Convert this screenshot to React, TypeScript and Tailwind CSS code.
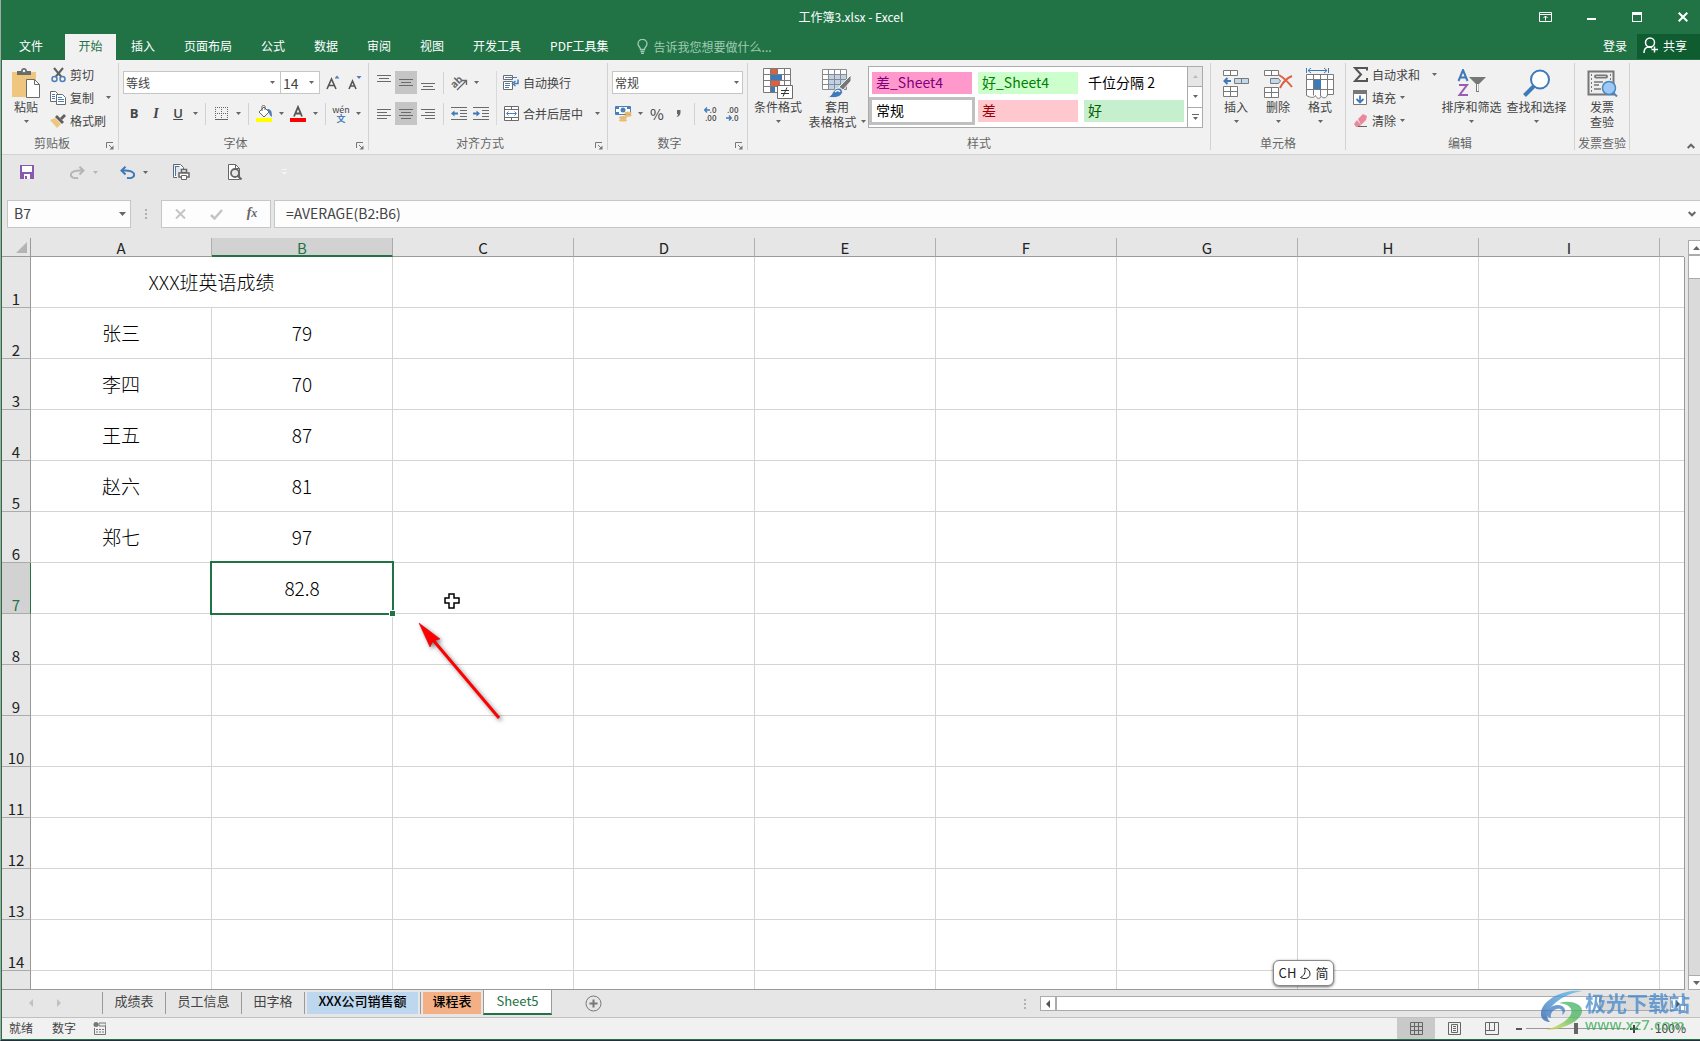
import React from 'react';

const COLUMNS = ['A', 'B', 'C', 'D', 'E', 'F', 'G', 'H', 'I'];
const ROWS = [1, 2, 3, 4, 5, 6, 7, 8, 9, 10, 11, 12, 13, 14];

const CELLS: Record<string, string> = {
  A1: 'XXX班英语成绩',
  A2: '张三', B2: '79',
  A3: '李四', B3: '70',
  A4: '王五', B4: '87',
  A5: '赵六', B5: '81',
  A6: '郑七', B6: '97',
  B7: '82.8',
};

const MENU_TABS = ['插入', '页面布局', '公式', '数据', '审阅', '视图', '开发工具', 'PDF工具集'];

const STYLES = [
  { label: '差_Sheet4', className: 'border-transparent bg-[#ff99cc] text-[#800080]' },
  { label: '好_Sheet4', className: 'border-transparent bg-[#ccffcc] text-[#008000]' },
  { label: '千位分隔 2', className: 'border-transparent bg-white text-black' },
  { label: '常规', className: 'border-[#c0c0c0] bg-white text-black' },
  { label: '差', className: 'border-transparent bg-[#ffc7ce] text-[#9c0006]' },
  { label: '好', className: 'border-transparent bg-[#c6efce] text-[#006100]' },
];

const Arrow = ({ className = 'text-[#666]' }: { className?: string }) => (
  <svg className={`shrink-0 ${className}`} width="5" height="3" viewBox="0 0 5 3" fill="currentColor">
    <path d="M0 0h5L2.5 3z" />
  </svg>
);

const DropArrow = ({ label }: { label: string }) => (
  <button aria-label={label} className="flex h-[23px] w-3 items-center justify-center">
    <Arrow />
  </button>
);

const Separator = () => <div className="mx-1 h-[22px] w-px shrink-0 bg-[#d2d2d2]" />;

interface ToolProps {
  label: string;
  active?: boolean;
  children: React.ReactNode;
}

const Tool = ({ label, active, children }: ToolProps) => (
  <button
    aria-label={label}
    className={`flex h-[23px] w-[22px] shrink-0 items-center justify-center ${active ? 'bg-[#c5c5c5]' : ''}`}
  >
    {children}
  </button>
);

interface GroupProps {
  label: string;
  width: string;
  launcher?: boolean;
  children: React.ReactNode;
}

const Group = ({ label, width, launcher, children }: GroupProps) => (
  <section className={`relative flex h-[87px] shrink-0 flex-col border-r border-[#d2d2d2] ${width}`}>
    <div className="flex h-[71px] shrink-0">{children}</div>
    <div className={`text-center leading-[18px] whitespace-nowrap text-[#666] ${launcher ? 'pr-4' : ''}`}>{label}</div>
    {launcher && (
      <button aria-label={`${label}设置`} className="absolute right-1 bottom-0">
        <svg width="8" height="8" viewBox="0 0 8 8" fill="none" stroke="#777">
          <path d="M.5 6V.5H7M3 3l3 3" />
          <path d="M7.500 3.500v4h-4z" fill="#777" stroke="none" />
        </svg>
      </button>
    )}
  </section>
);

interface BigButtonProps {
  lines: string[];
  width: string;
  arrow?: 'below' | 'side' | 'none';
  children: React.ReactNode;
}

const BigButton = ({ lines, width, arrow = 'below', children }: BigButtonProps) => (
  <button className={`flex shrink-0 flex-col items-center pt-1 whitespace-nowrap ${width}`}>
    <span className="flex h-8 items-center">{children}</span>
    <span className="leading-[15px]">{lines[0]}</span>
    {lines[1] && (
      <span className="flex items-center gap-1 leading-[15px]">
        {lines[1]}
        {arrow === 'side' && <Arrow />}
      </span>
    )}
    {arrow === 'below' && (
      <span className="flex h-[15px] items-center">
        <Arrow />
      </span>
    )}
  </button>
);

interface RowButtonProps {
  label: string;
  arrow?: boolean;
  wide?: boolean;
  children: React.ReactNode;
}

const RowButton = ({ label, arrow, wide, children }: RowButtonProps) => (
  <button className="flex h-[23px] items-center gap-1 whitespace-nowrap">
    <span className="flex w-4 justify-center">{children}</span>
    {label}
    {arrow && <span className={wide ? 'pl-2' : ''}><Arrow /></span>}
  </button>
);

interface LinesProps {
  lines: [number, number, number][];
}

// each entry is x, y, length of one horizontal stroke
const Lines = ({ lines }: LinesProps) => (
  <svg width="16" height="16" viewBox="0 0 16 16" fill="#6a6a6a" shapeRendering="crispEdges">
    {lines.map(([x, y, w]) => (
      <rect key={y} x={x} y={y} width={w} height="1" />
    ))}
  </svg>
);

const ClipboardGroup = () => (
  <Group label="剪贴板" width="w-[117px]" launcher>
    <BigButton lines={['粘贴']} width="w-12">
      <svg width="29" height="31" viewBox="0 0 29 31">
        <path d="M0 4h24v25H0z" fill="#eec67e" />
        <path d="M5 7V3h4c0-4 6-4 6 0h4v4z" fill="#6b6b6b" />
        <circle cx="12" cy="3" r="1.3" fill="#f1f1f1" />
        <path d="M14.500 11.500h8l5 5v13h-13z" fill="#fff" stroke="#6b6b6b" />
        <path d="M22.500 11.500v5h5" fill="none" stroke="#6b6b6b" />
      </svg>
    </BigButton>
    <div className="flex flex-col">
      <RowButton label="剪切">
        <svg width="15" height="16" viewBox="0 0 15 16" fill="none">
          <path d="M3 1l7.500 9M12 1L4.500 10" stroke="#5f5f5f" strokeWidth="2" />
          <circle cx="3.500" cy="12" r="2.500" stroke="#4a7fb9" strokeWidth="1.500" />
          <circle cx="11.500" cy="12" r="2.500" stroke="#4a7fb9" strokeWidth="1.500" />
        </svg>
      </RowButton>
      <RowButton label="复制" arrow wide>
        <svg width="16" height="14" viewBox="0 0 16 14" fill="#fff" stroke="#6b6b6b">
          <path d="M.5.500h5l2 2v8h-7z" />
          <path d="M2 3.500h3M2 5.500h3M2 7.500h3" stroke="#4a7fb9" />
          <path d="M6.500 3.500h6l3 3v7h-9z" />
          <path d="M8 6.500h4M8 8.500h6M8 10.500h6" stroke="#4a7fb9" />
        </svg>
      </RowButton>
      <RowButton label="格式刷">
        <svg width="16" height="14" viewBox="0 0 16 14">
          <path d="M0 6l5-2 6 6-4 4z" fill="#eec67e" />
          <path d="M5 3l2-2 7 7-2 2z" fill="#5f5f5f" />
          <path d="M10 4l4-4 2 2-4 4z" fill="#5f5f5f" />
        </svg>
      </RowButton>
    </div>
  </Group>
);

const FontGroup = () => (
  <Group label="字体" width="w-[250px]" launcher>
    <div className="flex flex-col gap-2 pt-2 pl-1">
      <div className="flex items-center">
        <div className="relative flex items-center">
          <select aria-label="字体名称" className="h-[23px] w-[158px] appearance-none border border-[#c6c6c6] bg-white px-0.5">
            <option>等线</option>
          </select>
          <Arrow className="pointer-events-none absolute right-1.5 text-[#666]" />
        </div>
        <div className="relative -ml-px flex items-center">
          <select aria-label="字号" className="h-[23px] w-10 appearance-none border border-[#c6c6c6] bg-white px-0.5 text-sm">
            <option>14</option>
          </select>
          <Arrow className="pointer-events-none absolute right-1.5 text-[#666]" />
        </div>
        <div className="flex pl-0.5">
          <Tool label="增大字号">
            <svg width="14" height="15" viewBox="0 0 14 15">
              <path d="M1 14L5.500 4 10 14M2.500 10.500h6" fill="none" stroke="#555" strokeWidth="1.600" />
              <path d="M8.500 3.500h5L11 .5z" fill="#4a7fb9" />
            </svg>
          </Tool>
          <Tool label="减小字号">
            <svg width="14" height="15" viewBox="0 0 14 15">
              <path d="M1 14l3.500-8L8 14M2.500 11h4" fill="none" stroke="#555" strokeWidth="1.600" />
              <path d="M8.500 1h5L11 4z" fill="#4a7fb9" />
            </svg>
          </Tool>
        </div>
      </div>
      <div className="flex items-center">
        <Tool label="加粗"><b className="font-['Open_Sans',sans-serif] text-[13px]">B</b></Tool>
        <Tool label="倾斜"><i className="font-['Liberation_Serif',serif] text-sm font-bold">I</i></Tool>
        <Tool label="下划线"><u className="font-['Open_Sans',sans-serif] text-[13px] font-semibold">U</u></Tool>
        <DropArrow label="下划线类型" />
        <Separator />
        <Tool label="边框">
          <svg width="13" height="13" viewBox="0 0 13 13" fill="none" stroke="#666">
            <path d="M.5 0v12M6.500 0v12M12.500 0v12M0 .5h13M0 6.500h13" strokeDasharray="1 1" />
            <path d="M0 12.500h13" />
          </svg>
        </Tool>
        <DropArrow label="边框类型" />
        <Separator />
        <Tool label="填充颜色">
          <svg width="17" height="17" viewBox="0 0 17 17">
            <path d="M3 7l5-5 5 5-5 5z" fill="#fff" stroke="#666" />
            <path d="M6 6V1.500C6 0 9 0 9 1.500V5" fill="none" stroke="#666" />
            <path d="M11 4c4 0 5 2 5 8-2-1-3-3-3-5z" fill="#4a7fb9" />
            <path d="M0 13h16v4H0z" fill="#ffff00" />
          </svg>
        </Tool>
        <DropArrow label="更多填充颜色" />
        <Tool label="字体颜色">
          <svg width="17" height="17" viewBox="0 0 17 17">
            <path d="M4 11.500L8 2l4 9.500M5.500 8.500h5" fill="none" stroke="#555" strokeWidth="1.800" />
            <path d="M0 13h16v4H0z" fill="#f00" />
          </svg>
        </Tool>
        <DropArrow label="更多字体颜色" />
        <Separator />
        <Tool label="拼音">
          <span className="flex flex-col items-center text-[9px] leading-[9px]">
            <span>wén</span>
            <span className="font-bold text-[#4a7fb9]">文</span>
          </span>
        </Tool>
        <DropArrow label="拼音设置" />
      </div>
    </div>
  </Group>
);

const AlignGroup = () => (
  <Group label="对齐方式" width="w-[239px]" launcher>
    <div className="flex flex-col gap-2 pt-2 pl-1">
      <div className="flex items-center">
        <Tool label="顶端对齐"><Lines lines={[[1, 0, 14], [3, 3, 10], [1, 6, 14]]} /></Tool>
        <Tool label="垂直居中" active><Lines lines={[[1, 4, 14], [3, 7, 10], [1, 10, 14]]} /></Tool>
        <Tool label="底端对齐"><Lines lines={[[1, 8, 14], [3, 11, 10], [1, 14, 14]]} /></Tool>
        <Separator />
        <Tool label="方向">
          <svg className="overflow-visible" width="17" height="16" viewBox="0 0 17 16" fill="none" stroke="#666">
            <text x="0" y="11" transform="rotate(-45 5 8)" fontSize="10" fontWeight="600" fill="#666" stroke="none">ab</text>
            <path d="M6 15L15 6M11 5.500h4.500V10" strokeWidth="1.300" />
          </svg>
        </Tool>
        <DropArrow label="更多方向" />
      </div>
      <div className="flex items-center">
        <Tool label="左对齐"><Lines lines={[[1, 3, 14], [1, 6, 10], [1, 9, 14], [1, 12, 10]]} /></Tool>
        <Tool label="居中" active><Lines lines={[[1, 3, 14], [3, 6, 10], [1, 9, 14], [3, 12, 10]]} /></Tool>
        <Tool label="右对齐"><Lines lines={[[1, 3, 14], [5, 6, 10], [1, 9, 14], [5, 12, 10]]} /></Tool>
        <Separator />
        <Tool label="减少缩进量">
          <svg width="16" height="13" viewBox="0 0 16 13">
            <path d="M0 .5h16M9 3.500h7M9 6.500h7M9 9.500h7M0 12.500h16" stroke="#6a6a6a" />
            <path d="M0 6.500l3.500-3v2H7v2H3.500v2z" fill="#3f7ab8" />
          </svg>
        </Tool>
        <Tool label="增加缩进量">
          <svg width="16" height="13" viewBox="0 0 16 13">
            <path d="M0 .5h16M9 3.500h7M9 6.500h7M9 9.500h7M0 12.500h16" stroke="#6a6a6a" />
            <path d="M7 6.500l-3.500-3v2H0v2h3.500v2z" fill="#3f7ab8" />
          </svg>
        </Tool>
      </div>
    </div>
    <div className="mt-2 ml-1 h-[54px] w-px bg-[#d9d9d9]" />
    <div className="flex flex-col gap-2 pt-2 pl-1.5">
      <RowButton label="自动换行">
        <svg className="shrink-0" width="16" height="15" viewBox="0 0 16 15" fill="none">
          <path d="M.5.500h9v4h-9zM.5 6.500h9v8h-9z" fill="#fff" stroke="#6b6b6b" />
          <path d="M2 2.500h12M2 8.500h5M2 10.500h5M2 12.500h4" stroke="#4a7fb9" />
          <path d="M15 4.500v4h-4M12.500 6l-3 2.500 3 2.500" stroke="#4a7fb9" strokeWidth="1.500" />
        </svg>
      </RowButton>
      <RowButton label="合并后居中" arrow wide>
        <svg className="shrink-0" width="15" height="15" viewBox="0 0 15 15" fill="none">
          <path d="M.5.500h14v14H.5zM.5 3.500h14M.5 11.500h14M7.500.5v3M7.500 11.500v3" fill="#fff" stroke="#6b6b6b" />
          <path d="M3 7.500h9M4.500 5.500l-2 2 2 2M10.500 5.500l2 2-2 2" stroke="#4a7fb9" />
        </svg>
      </RowButton>
    </div>
  </Group>
);

const NumberGroup = () => (
  <Group label="数字" width="w-[140px]" launcher>
    <div className="flex flex-col gap-2 pt-2 pl-1">
      <div className="relative flex items-center">
        <select aria-label="数字格式" className="h-[23px] w-[131px] appearance-none border border-[#c6c6c6] bg-white px-0.5">
          <option>常规</option>
        </select>
        <Arrow className="pointer-events-none absolute right-1 text-[#666]" />
      </div>
      <div className="flex items-center">
        <Tool label="会计数字格式">
          <svg width="17" height="17" viewBox="0 0 17 17">
            <path d="M.5 1.500h15v8H.5z" fill="#fff" stroke="#4a7fb9" />
            <path d="M1 2h3v2H1zM12 2h3v2h-3zM1 7h3v2H1z" fill="#4a7fb9" />
            <circle cx="8" cy="5" r="2.500" fill="#4a7fb9" />
            <ellipse cx="13" cy="8" rx="3.500" ry="1.500" fill="#e8bb70" />
            <ellipse cx="13" cy="10.500" rx="3.500" ry="1.300" fill="#e8bb70" />
            <ellipse cx="8" cy="12.500" rx="4" ry="1.500" fill="#e8bb70" />
            <ellipse cx="8" cy="15.300" rx="4" ry="1.300" fill="#e8bb70" />
          </svg>
        </Tool>
        <DropArrow label="更多会计格式" />
        <Tool label="百分比样式"><span className="text-[15px]">%</span></Tool>
        <Tool label="千位分隔样式">
          <svg width="6" height="8" viewBox="0 0 6 8" fill="#666">
            <path d="M1 0h3.500v2.500C4.500 5 3 6.500.5 7c1-1 1.500-2 1.500-3H1z" />
          </svg>
        </Tool>
        <Separator />
        <Tool label="增加小数位数">
          <span className="flex flex-col items-end text-[8px] leading-[8px] font-medium">
            <span className="flex items-center">
              <svg width="6" height="6" viewBox="0 0 6 6" fill="none" stroke="#3f7ab8"><path d="M6 3H1M3 .5L.7 3 3 5.500" strokeWidth="1.300" /></svg>
              .0
            </span>
            <span>.00</span>
          </span>
        </Tool>
        <Tool label="减少小数位数">
          <span className="flex flex-col items-end text-[8px] leading-[8px] font-medium">
            <span>.00</span>
            <span className="flex items-center">
              <svg width="6" height="6" viewBox="0 0 6 6" fill="none" stroke="#3f7ab8"><path d="M0 3h5M3 .5L5.300 3 3 5.500" strokeWidth="1.300" /></svg>
              .0
            </span>
          </span>
        </Tool>
      </div>
    </div>
  </Group>
);

const StylesGroup = () => (
  <Group label="样式" width="w-[463px]">
    <BigButton lines={['条件格式']} width="w-[60px]">
      <svg width="30" height="31" viewBox="0 0 30 31">
        <path d="M.5.500h27v24H.5zM7.500.500v24M14.500.500v24M21.500.500v24M.5 6.500h27M.5 12.500h27M.5 18.500h27" fill="#fff" stroke="#7a7a7a" />
        <path d="M8 1h6v5H8zM8 13h9v5H8z" fill="#dc6141" />
        <path d="M8 7h11v5H8zM8 19h4v5H8z" fill="#3f7ab8" />
        <path d="M14.500 17.500h15v13h-15z" fill="#fff" stroke="#6b6b6b" />
        <path d="M18 22.500h8M18 25.500h8M24 19.500l-4 9" stroke="#333" fill="none" />
      </svg>
    </BigButton>
    <BigButton lines={['套用', '表格格式']} width="w-[58px]" arrow="side">
      <svg width="30" height="30" viewBox="0 0 30 30">
        <path d="M.5 1.500h24v20H.5z" fill="#fff" />
        <path d="M6 7h18v15H6z" fill="#bdd1e9" />
        <path d="M.5 1.500h24v20H.5zM6.500 1.500v20M12.500 1.500v20M18.500 1.500v20M.5 6.500h24M.5 11.500h24M.5 16.500h24" fill="none" stroke="#8a8a8a" />
        <path d="M29 7v6l-8 9-4-3z" fill="#777" stroke="#f1f1f1" />
        <path d="M6 29c5-1 4-8 10-9 4 0 6 4 3 7s-8 3-13 2z" fill="#3f7ab8" stroke="#f1f1f1" />
        <path d="M13 24c2-2 4-2 5 0" stroke="#fff" fill="none" strokeWidth="1.500" />
      </svg>
    </BigButton>
    <div className="mt-[3px] ml-0.5 flex h-[62px] border border-[#ababab] bg-white">
      <div className="grid grid-cols-3 content-start pt-0.5">
        {STYLES.map((style) => (
          <button
            key={style.label}
            className={`h-7 w-[106px] border-3 bg-clip-padding pb-0.5 pl-1 text-left text-sm leading-5 ${style.className}`}
          >
            {style.label}
          </button>
        ))}
      </div>
      <div className="flex w-[15px] flex-col border-l border-[#ababab]">
        <button aria-label="上一行" className="flex flex-1 items-center justify-center bg-[#e6e6e6]">
          <Arrow className="rotate-180 text-[#bbb]" />
        </button>
        <button aria-label="下一行" className="flex flex-1 items-center justify-center border-y border-[#ababab]">
          <Arrow />
        </button>
        <button aria-label="其他样式" className="flex flex-1 flex-col items-center justify-center gap-0.5">
          <span className="h-px w-[7px] bg-[#666]" />
          <Arrow />
        </button>
      </div>
    </div>
  </Group>
);

const CellsGroup = () => (
  <Group label="单元格" width="w-[135px]">
    <div className="flex pl-1">
      <BigButton lines={['插入']} width="w-[42px]">
        <svg width="27" height="29" viewBox="0 0 27 29" fill="#fff" stroke="#7a7a7a">
          <path d="M.5 1.500h14v5H.5zM7.500 1.500v5M.5 17.500h14v10H.5zM.5 22.500h14M7.500 17.500v10" />
          <path d="M11.500 9.500h14v5h-14zM18.500 9.500v5" fill="#c3d8ea" />
          <path d="M8 12H2M4.500 9L1.500 12l3 3" fill="none" stroke="#3f7ab8" strokeWidth="2" />
        </svg>
      </BigButton>
      <BigButton lines={['删除']} width="w-[42px]">
        <svg width="29" height="29" viewBox="0 0 29 29" fill="#fff" stroke="#7a7a7a">
          <path d="M.5 1.500h14v5H.5zM7.500 1.500v5M.5 18.500h14v10H.5zM.5 23.500h14M7.500 18.500v10" />
          <path d="M6.500 9.500h8l2 2.500-2 2.500h-8z" fill="#c3d8ea" />
          <path d="M15 6c5 3 9 7 13 12M28 7c-5 2-9 6-12 12" fill="none" stroke="#dc6141" strokeWidth="2" />
        </svg>
      </BigButton>
      <BigButton lines={['格式']} width="w-[42px]">
        <svg width="29" height="32" viewBox="0 0 29 32" fill="#fff" stroke="#7a7a7a">
          <path d="M.5 7.500h27v20h-6c-1 4-4 4-6 2-2 3-5 2-6-1-2 3-5 2-9 0zM7.500 7.500v21M14.500 7.500v22M21.500 7.500v21M.5 12.500h27M.5 22.500h27" />
          <path d="M8 13h7v9H8z" fill="#3f7ab8" stroke="none" />
          <path d="M.5 1v5M22.500 1v5M2 3.500h19M5 1L2 3.500 5 6M18 1l3 2.500L18 6" fill="none" stroke="#3f7ab8" />
        </svg>
      </BigButton>
    </div>
  </Group>
);

const EditGroup = () => (
  <Group label="编辑" width="w-[229px]">
    <div className="flex w-[93px] shrink-0 flex-col pl-1.5">
      <RowButton label="自动求和" arrow wide>
        <svg width="15" height="15" viewBox="0 0 15 15" fill="none" stroke="#555" strokeWidth="2">
          <path d="M14 3.500V1H2l6 6.500L2 14h12v-3" />
        </svg>
      </RowButton>
      <RowButton label="填充" arrow>
        <svg width="15" height="15" viewBox="0 0 15 15" fill="none">
          <path d="M.5.500h13v14H.5z" fill="#fff" stroke="#777" />
          <path d="M0 0h14v4H0z" fill="#777" />
          <path d="M7 5.500V12M3.500 9L7 12.500 10.500 9" stroke="#3f7ab8" strokeWidth="1.800" />
        </svg>
      </RowButton>
      <RowButton label="清除" arrow>
        <svg width="15" height="14" viewBox="0 0 15 14">
          <path d="M5 5l5-5 4 2-1 4-5 5z" fill="#e8899c" />
          <path d="M4 6l4 5-2 2H3L1 10z" fill="#e8899c" />
          <path d="M5 12.500h9" stroke="#666" />
        </svg>
      </RowButton>
    </div>
    <BigButton lines={['排序和筛选']} width="w-[65px]">
      <svg width="30" height="28" viewBox="0 0 30 28" fill="none">
        <path d="M1.500 12L6 1l4.500 11M3 8.500h6" stroke="#3f7ab8" strokeWidth="2" />
        <path d="M2 16h8L2.500 26H11" stroke="#9a5bb5" strokeWidth="2" />
        <path d="M12 8h17l-7 7v8h-3v-8z" fill="#777" />
        <path d="M20 15h1.500v7H20z" fill="#fff" />
      </svg>
    </BigButton>
    <BigButton lines={['查找和选择']} width="w-[65px]">
      <svg width="28" height="28" viewBox="0 0 28 28">
        <path d="M1.500 26.500L11 17" stroke="#3f7ab8" strokeWidth="4" />
        <circle cx="17" cy="10.500" r="9" fill="#fff" stroke="#3f7ab8" strokeWidth="2" />
      </svg>
    </BigButton>
  </Group>
);

const InvoiceGroup = () => (
  <Group label="发票查验" width="w-[55px]">
    <BigButton lines={['发票', '查验']} width="w-[54px]" arrow="none">
      <svg width="31" height="27" viewBox="0 0 31 27" fill="none" stroke="#777">
        <path d="M1.500 1.500h25v23h-25z" fill="#eee" strokeWidth="2" />
        <path d="M4.500 4v19M23.500 4v10" strokeDasharray="2 2" />
        <path d="M9 6.500h10" strokeWidth="4" strokeLinecap="round" />
        <path d="M9 6.500h10" stroke="#ccc" />
        <path d="M7 12h9M7 15h5M7 19h7" strokeWidth="1.500" />
        <circle cx="22" cy="18" r="6.500" fill="#9cc9f5" stroke="#4a88bd" strokeWidth="1.500" />
        <path d="M26 22.500l4 4" stroke="#4a88bd" strokeWidth="2" />
      </svg>
    </BigButton>
  </Group>
);

const TitleBar = () => (
  <header className="shrink-0 bg-[#217346] text-white">
    <div className="grid h-[34px] grid-cols-[1fr_auto_1fr] items-center">
      <h1 className="col-start-2">工作簿3.xlsx - Excel</h1>
      <div className="-mr-1.5 flex justify-end">
        <button aria-label="功能区显示选项" className="flex h-8 w-[46px] items-center justify-center">
          <svg width="13" height="10" viewBox="0 0 13 10" fill="none" stroke="#fff">
            <path d="M.5.500h12v9H.5zM.5 2.500h12M6.500 8.500V4M4.500 6l2-2 2 2" />
          </svg>
        </button>
        <button aria-label="最小化" className="flex h-8 w-[46px] items-center justify-center">
          <span className="mt-1 h-0.5 w-[9px] bg-white" />
        </button>
        <button aria-label="最大化" className="flex h-8 w-[46px] items-center justify-center">
          <span className="h-2.5 w-2.5 border border-t-3 border-white" />
        </button>
        <button aria-label="关闭" className="flex h-8 w-[46px] items-center justify-center">
          <svg width="10" height="10" viewBox="0 0 10 10" stroke="#fff" strokeWidth="2"><path d="M.7.700l8.600 8.600M9.300.700L.7 9.300" /></svg>
        </button>
      </div>
    </div>
    <nav className="flex h-[26px] items-stretch whitespace-nowrap">
      <button className="w-[63px] pr-[22px] pb-0.5 pl-[17px]">文件</button>
      <button className="w-[51px] bg-[#f1f1f1] pb-0.5 text-[#217346]">开始</button>
      <div className="flex gap-[29px] pl-[15px]">
        {MENU_TABS.map((tab) => (
          <button key={tab} className="pb-0.5">{tab}</button>
        ))}
      </div>
      <button className="flex items-center gap-1.5 pb-px pl-7 text-[#a0cbb2]">
        <svg width="11" height="15" viewBox="0 0 11 15" fill="none" stroke="#a0cbb2">
          <path d="M3.500 10.500C3.500 8 1 7.500 1 4.800a4.500 4.500 0 019 0C10 7.500 7.500 8 7.500 10.500zM3.500 12.500h4M4 14.300h3" strokeWidth="1.300" />
        </svg>
        告诉我您想要做什么...
      </button>
      <button className="ml-auto px-2.5 pb-0.5">登录</button>
      <button className="mb-px flex w-[63px] items-center gap-1 bg-[#0e5c2f] pb-0.5 pl-1.5">
        <svg width="16" height="17" viewBox="0 0 16 17" fill="none" stroke="#fff" strokeWidth="1.500">
          <circle cx="7" cy="5.500" r="4.500" />
          <path d="M1 16c0-4 2-6 5-6 1.500 0 2 .3 3 1M11.500 9.500v6M8.500 12.500h6.500" />
        </svg>
        共享
      </button>
    </nav>
  </header>
);

const QuickAccess = () => (
  <div className="flex h-[45px] shrink-0 items-start pt-[9px] pl-[18px]">
    <button aria-label="保存" className="h-4 w-[50px]">
      <svg width="14" height="14" viewBox="0 0 14 14">
        <path d="M0 0h14v14H0z" fill="#8a58ac" />
        <path d="M2 1h10v6H2zM4 9h6v5H4z" fill="#fff" />
        <path d="M5 11h2v3H5z" fill="#8a58ac" />
      </svg>
    </button>
    <button aria-label="恢复" className="flex h-4 w-[50px] items-center gap-2">
      <svg width="15" height="13" viewBox="0 0 15 13" fill="none" stroke="#b5b5b5" strokeWidth="2">
        <path d="M8 12C1 13 0 9 1.500 7S6 4 13 4.500M9.500.700L13.500 4.500l-4 4" />
      </svg>
      <Arrow className="text-[#b5b5b5]" />
    </button>
    <button aria-label="撤消" className="flex h-4 w-[53px] items-center gap-2">
      <svg width="15" height="13" viewBox="0 0 15 13" fill="none" stroke="#3f7ab8" strokeWidth="2">
        <path d="M7 12c7 1 8-3 6.500-5S9 4 2 4.500M5.500.700L1.500 4.500l4 4" />
      </svg>
      <Arrow />
    </button>
    <button aria-label="快速打印" className="h-4 w-[55px]">
      <svg width="17" height="16" viewBox="0 0 17 16" fill="none" stroke="#666">
        <path d="M.5.500h7l3 3V5M.5.500v13H4" fill="#fff" />
        <path d="M2.500 2v10M2.500 2.500h4" stroke="#3f7ab8" />
        <path d="M8.500 5.500h5v3h-5zM6 9h10v4H6z" fill="#fff" strokeWidth="1.500" />
        <path d="M8.500 11.500h5v4h-5z" fill="#fff" />
      </svg>
    </button>
    <button aria-label="打印预览" className="h-4 w-[54px]">
      <svg width="15" height="16" viewBox="0 0 15 16" fill="none" stroke="#666">
        <path d="M.5.500h7l4 4v11H.5z" fill="#fff" />
        <path d="M7.500.500v4h4" />
        <circle cx="7" cy="9" r="4" fill="#e6e6e6" strokeWidth="1.800" />
        <path d="M9.500 11.500l4 4" strokeWidth="2.200" />
      </svg>
    </button>
    <button aria-label="自定义快速访问工具栏" className="flex h-4 flex-col items-center justify-center gap-0.5">
      <span className="h-px w-[5px] bg-[#f5f5f5]" />
      <Arrow className="text-[#f5f5f5]" />
    </button>
  </div>
);

const FormulaBar = () => (
  <div className="flex h-7 shrink-0 items-stretch pl-[5px]">
    <div className="relative flex items-center">
      <input aria-label="名称框" defaultValue="B7" className="h-7 w-[124px] border border-[#c6c6c6] bg-[#fdfdfd] pb-0.5 pl-1.5 text-sm text-[#444]" />
      <svg className="pointer-events-none absolute right-[5px]" width="7" height="4" viewBox="0 0 7 4" fill="#666"><path d="M0 0h7L3.500 4z" /></svg>
    </div>
    <div className="flex w-[30px] flex-col items-center justify-center gap-0.5">
      <span className="h-0.5 w-0.5 bg-[#b0b0b0]" />
      <span className="h-0.5 w-0.5 bg-[#b0b0b0]" />
      <span className="h-0.5 w-0.5 bg-[#b0b0b0]" />
    </div>
    <div className="grid w-[110px] grid-cols-3 items-center justify-items-center border border-[#c6c6c6] bg-[#fdfdfd]">
      <button aria-label="取消">
        <svg width="11" height="10" viewBox="0 0 11 10" stroke="#c4c4c4" strokeWidth="2"><path d="M1 .5l9 9M10 .5l-9 9" /></svg>
      </button>
      <button aria-label="输入">
        <svg width="13" height="11" viewBox="0 0 13 11" fill="none" stroke="#c4c4c4" strokeWidth="2.500"><path d="M1 6l3.500 3.500L12 1" /></svg>
      </button>
      <button aria-label="插入函数" className="pb-0.5 font-['Liberation_Serif',serif] text-sm font-bold text-[#666] italic">
        f<span className="text-xs">x</span>
      </button>
    </div>
    <div className="relative ml-[3px] flex flex-1 items-center">
      <input aria-label="编辑栏" defaultValue="=AVERAGE(B2:B6)" className="h-7 w-full border border-r-0 border-[#c6c6c6] bg-[#fdfdfd] pb-0.5 pl-[11px] text-sm text-[#444]" />
      <button aria-label="展开编辑栏" className="absolute right-1">
        <svg width="8" height="6" viewBox="0 0 8 6" fill="none" stroke="#666" strokeWidth="2"><path d="M.7 1L4 4.300 7.300 1" /></svg>
      </button>
    </div>
  </div>
);

const Cell = ({ id }: { id: string }) => {
  const selected = id === 'B7';
  return (
    <td
      colSpan={id === 'A1' ? 2 : 1}
      className="relative border-r border-b border-[#d4d4d4] text-center align-middle text-[19px] leading-6 font-light text-black"
    >
      {CELLS[id]}
      {selected && (
        <>
          <div className="absolute -inset-0.5 z-10 border-2 border-[#217346]" />
          <div className="absolute -right-1 -bottom-1 z-10 h-[7px] w-[7px] border border-white bg-[#217346]" />
        </>
      )}
    </td>
  );
};

const Grid = () => (
  <table className="w-full table-fixed border-separate border-spacing-0 text-[15px] text-[#222]">
    <colgroup>
      <col className="w-[29px]" />
      {COLUMNS.map((col) => <col key={col} className="w-[181px]" />)}
      <col />
    </colgroup>
    <thead>
      <tr className="h-[19px] leading-[18px]">
        <th aria-label="全选" className="border-r border-b border-[#999] bg-[#e6e6e6] p-0">
          <svg className="mr-[3px] ml-auto" width="11" height="11" viewBox="0 0 11 11" fill="#b4b4b4"><path d="M11 0v11H0z" /></svg>
        </th>
        {COLUMNS.map((col) => (
          <th
            key={col}
            className={`border-r p-0 pt-0.5 font-normal ${
              col === 'B'
                ? 'border-b-2 border-r-[#ababab] border-b-[#217346] bg-[#d2d2d2] leading-[15px] text-[#217346]'
                : 'border-b border-r-[#b0b0b0] border-b-[#999] leading-4'
            }`}
          >
            {col}
          </th>
        ))}
        <th className="border-b border-[#999] p-0" />
      </tr>
    </thead>
    <tbody>
      {ROWS.map((row) => (
        <tr key={row} className="h-[51px]">
          <th
            className={`border-r border-b border-b-[#ababab] p-0 align-bottom leading-4 font-normal ${
              row === 7
                ? 'border-r-[#217346] bg-[#d2d2d2] text-[#217346]'
                : 'border-r-[#999] bg-[#e6e6e6]'
            }`}
          >
            {row}
          </th>
          {COLUMNS.filter((col) => row !== 1 || col !== 'B').map((col) => (
            <Cell key={col} id={`${col}${row}`} />
          ))}
          <td className="border-b border-[#d4d4d4]" />
        </tr>
      ))}
      <tr className="h-[51px]">
        <th className="border-r border-[#999] bg-[#e6e6e6]" />
        {COLUMNS.map((col) => (
          <td key={col} className="border-r border-[#d4d4d4]" />
        ))}
        <td />
      </tr>
    </tbody>
  </table>
);

const Worksheet = () => (
  <main className="flex min-h-0 flex-1 pt-2.5">
    <div className="relative min-w-0 flex-1 overflow-hidden border-b border-[#999]">
      <div className="absolute inset-x-0 top-[19px] bottom-0 border-r border-[#999] bg-white" />
      <div className="relative mr-px">
        <Grid />
      </div>
      <svg className="absolute top-[355px] left-[442px]" width="16" height="16" viewBox="0 0 16 16">
        <path d="M5 1h5v4h5v5h-5v5H5v-5H1V5h4z" fill="#fff" stroke="#000" strokeWidth="1.500" />
      </svg>
      <svg className="absolute top-[381px] left-[413px] drop-shadow-[2px_2px_2px_rgba(0,0,0,0.5)]" width="92" height="108" viewBox="0 0 92 108">
        <path d="M18 21L84 99" stroke="#f00" strokeWidth="3" />
        <path d="M4 4l21 16-7 2-3 6z" fill="#f00" stroke="#c00" strokeWidth=".5" />
      </svg>
      <div className="absolute right-[351px] bottom-[3px] flex h-[26px] w-[61px] items-center justify-center gap-1 rounded-md border border-[#888] bg-white text-[13px] whitespace-nowrap text-[#222] shadow-[0_1px_3px_rgba(0,0,0,0.6)]">
        CH
        <svg width="11" height="13" viewBox="0 0 11 13" fill="none" stroke="#222"><path d="M4.500 1c1 3 1 7-4 9.500C5 13 10 11 10 7c0-3-2-5.500-5.500-6z" /></svg>
        简
      </div>
    </div>
    <div className="mt-0.5 ml-[3px] flex w-3 flex-col overflow-hidden border-l border-[#ababab] bg-[#dadada]">
      <button aria-label="向上滚动" className="flex h-[15px] w-[15px] shrink-0 items-center justify-center border-y border-[#ababab] bg-white">
        <svg width="7" height="4" viewBox="0 0 7 4" fill="#666"><path d="M0 4h7L3.500 0z" /></svg>
      </button>
      <div className="h-6 w-[15px] shrink-0 border-y border-[#ababab] bg-white" />
      <button aria-label="向下滚动" className="mt-auto flex h-[15px] w-[15px] shrink-0 items-center justify-center border-y border-[#ababab] bg-white">
        <svg width="7" height="4" viewBox="0 0 7 4" fill="#666"><path d="M0 0h7L3.500 4z" /></svg>
      </button>
    </div>
  </main>
);

const SheetTabs = () => (
  <div className="flex h-7 shrink-0 items-start border-b border-[#c0c0c0] text-[13px] text-[#444]">
    <div className="flex h-[26px] w-[100px] items-center gap-6 pl-[27px]">
      <button aria-label="上一个工作表"><svg width="4" height="8" viewBox="0 0 4 8" fill="#c0c0c0"><path d="M4 0v8L0 4z" /></svg></button>
      <button aria-label="下一个工作表"><svg width="4" height="8" viewBox="0 0 4 8" fill="#c0c0c0"><path d="M0 0v8l4-4z" /></svg></button>
    </div>
    <div className="mt-0.5 flex h-[22px] whitespace-nowrap">
      <button className="w-[63px] border-l border-[#999] pb-1 leading-[18px]">成绩表</button>
      <button className="w-[76px] border-l border-[#999] pb-1 leading-[18px]">员工信息</button>
      <button className="w-[63px] border-l border-[#999] pb-1 leading-[18px]">田字格</button>
      <div className="w-[116px] border-l border-[#999] px-0.5">
        <button className="h-[22px] w-full bg-[#bdd7ee] pb-1 leading-[18px] font-medium text-black">XXX公司销售额</button>
      </div>
      <div className="w-[63px] border-l border-[#999] px-0.5">
        <button className="h-[22px] w-full bg-[#f4b084] pb-1 leading-[18px] font-medium text-black">课程表</button>
      </div>
    </div>
    <button className="-mt-px h-[26px] w-[69px] border-x border-b-2 border-x-[#999] border-b-[#217346] bg-white leading-5 text-[#217346]">Sheet5</button>
    <button aria-label="新工作表" className="mt-[5px] ml-[33px]">
      <svg width="17" height="17" viewBox="0 0 17 17" fill="none" stroke="#777"><circle cx="8.500" cy="8.500" r="7.500" /><path d="M8.500 4.500v8M4.500 8.500h8" strokeWidth="2" /></svg>
    </button>
    <div className="mt-1.5 mr-[15px] ml-auto flex w-[661px] items-center">
      <div className="flex w-4 shrink-0 flex-col gap-0.5">
        <span className="h-0.5 w-0.5 bg-[#b0b0b0]" />
        <span className="h-0.5 w-0.5 bg-[#b0b0b0]" />
        <span className="h-0.5 w-0.5 bg-[#b0b0b0]" />
      </div>
      <div className="flex h-[15px] flex-1 border border-[#ababab] bg-[#dadada]">
        <button aria-label="向左滚动" className="flex w-[14px] items-center justify-center bg-white">
          <svg width="4" height="8" viewBox="0 0 4 8" fill="#555"><path d="M4 0v8L0 4z" /></svg>
        </button>
        <div className="w-[546px] border-x-2 border-[#ababab] bg-white" />
        <button aria-label="向右滚动" className="ml-auto flex w-[14px] items-center justify-center border-l border-[#ababab] bg-white">
          <svg width="4" height="8" viewBox="0 0 4 8" fill="#555"><path d="M0 0v8l4-4z" /></svg>
        </button>
      </div>
    </div>
  </div>
);

const StatusBar = () => (
  <footer className="flex h-[21px] shrink-0 items-center bg-[#f1f1f1] pr-[14px] text-[#444]">
    <span className="w-[43px] pb-0.5 pl-[7px]">就绪</span>
    <span className="w-[48px] pb-0.5 pl-[7px]">数字</span>
    <svg width="13" height="13" viewBox="0 0 13 13" fill="none" stroke="#777">
      <circle cx="3" cy="2.500" r="2.500" fill="#777" stroke="none" />
      <path d="M6 1h7v3H6zM1.500 6v6.500h11V4" />
      <path d="M3 7.500h8M3 10h8" strokeDasharray="2 1" />
    </svg>
    <div className="ml-auto flex h-[21px] items-center">
      <button aria-label="普通" className="flex h-[21px] w-[38px] items-center justify-center bg-[#c9c9c9]">
        <svg width="13" height="13" viewBox="0 0 13 13" fill="none" stroke="#666"><path d="M.5.500h12v12H.5zM4.500 0v13M8.500 0v13M0 4.500h13M0 8.500h13" /></svg>
      </button>
      <button aria-label="页面布局" className="flex h-[21px] w-[38px] items-center justify-center">
        <svg width="13" height="13" viewBox="0 0 13 13" fill="none" stroke="#666"><path d="M.5.500h12v12H.5zM3.500 2.500h6v8h-6zM5 4.500h3M5 6.500h3M5 8.500h3" /></svg>
      </button>
      <button aria-label="分页预览" className="flex h-[21px] w-[38px] items-center justify-center">
        <svg width="14" height="13" viewBox="0 0 14 13" fill="none" stroke="#666"><path d="M.5.500h13v12H.5zM4.500 0v8M9.500 0v8M0 8.500h10" /></svg>
      </button>
      <button aria-label="缩小" className="ml-[5px] h-0.5 w-1.5 bg-[#555]" />
      <input
        type="range"
        aria-label="缩放"
        defaultValue={50}
        className="mx-1 h-[11px] w-[100px] appearance-none bg-[linear-gradient(#999,#999)] bg-[length:100%_1px] bg-center bg-no-repeat [&::-webkit-slider-thumb]:h-[11px] [&::-webkit-slider-thumb]:w-1 [&::-webkit-slider-thumb]:appearance-none [&::-webkit-slider-thumb]:bg-[#666]"
      />
      <button aria-label="放大">
        <svg width="8" height="8" viewBox="0 0 8 8" stroke="#444" strokeWidth="2"><path d="M4 0v8M0 4h8" /></svg>
      </button>
      <button className="w-12 pb-0.5 text-right">100%</button>
    </div>
  </footer>
);

const Watermark = () => (
  <div className="pointer-events-none absolute right-[10px] bottom-[7px] flex items-start opacity-75">
    <svg width="42" height="42" viewBox="0 0 42 42">
      <defs>
        <linearGradient id="swirlBlue" x1="0" y1="1" x2="1" y2="0">
          <stop offset="0" stopColor="#2c5fae" />
          <stop offset="1" stopColor="#5cc0f0" />
        </linearGradient>
        <linearGradient id="swirlGreen" x1="0" y1="1" x2="1" y2="0">
          <stop offset="0" stopColor="#e6e04a" />
          <stop offset=".6" stopColor="#4cb85c" />
          <stop offset="1" stopColor="#3fae6a" />
        </linearGradient>
      </defs>
      <path d="M41 2C26 0 3 8 0 23c-1 6 3 10 9 10-5-5-3-12 3-17C19 9 29 4 41 2z" fill="url(#swirlBlue)" />
      <path d="M5 25c0-6 10-11 16-8 4 2 4 7 0 9 2-4-1-7-5-6-5 1-7 5-6 9-3-1-5-2-5-4z" fill="#3b7cc4" />
      <path d="M18 14c10-3 22 0 23 7 1 10-18 20-36 20 10-3 22-9 25-16 2-6-3-10-12-11z" fill="url(#swirlGreen)" />
    </svg>
    <div className="flex flex-col pl-0.5">
      <span className="text-[21px] leading-[26px] font-bold text-[#4488cc]">极光下载站</span>
      <span className="font-['Open_Sans',sans-serif] text-[15px] leading-[18px] font-semibold text-[#3fae5c]">www.xz7.com</span>
    </div>
  </div>
);

export default function App() {
  return (
    <div className="relative flex h-screen min-h-[600px] flex-col overflow-hidden border-b border-l border-b-[#22303a] border-l-[#a8a8a8] bg-[#e6e6e6] font-['Noto_Sans_CJK_SC',sans-serif] text-xs text-[#444]">
      <div className="flex min-h-0 flex-1 flex-col border-b border-l border-[#217346]">
        <TitleBar />
        <div className="flex h-[95px] shrink-0 border-b border-[#d2d2d2] bg-[#f1f1f1] pt-[3px]">
          <ClipboardGroup />
          <FontGroup />
          <AlignGroup />
          <NumberGroup />
          <StylesGroup />
          <CellsGroup />
          <EditGroup />
          <InvoiceGroup />
          <button aria-label="折叠功能区" className="mt-auto mr-[5px] mb-[5px] ml-auto">
            <svg width="8" height="6" viewBox="0 0 8 6" fill="none" stroke="#666" strokeWidth="2"><path d="M.7 5L4 1.700 7.300 5" /></svg>
          </button>
        </div>
        <QuickAccess />
        <FormulaBar />
        <Worksheet />
        <SheetTabs />
        <StatusBar />
      </div>
      <Watermark />
    </div>
  );
}
